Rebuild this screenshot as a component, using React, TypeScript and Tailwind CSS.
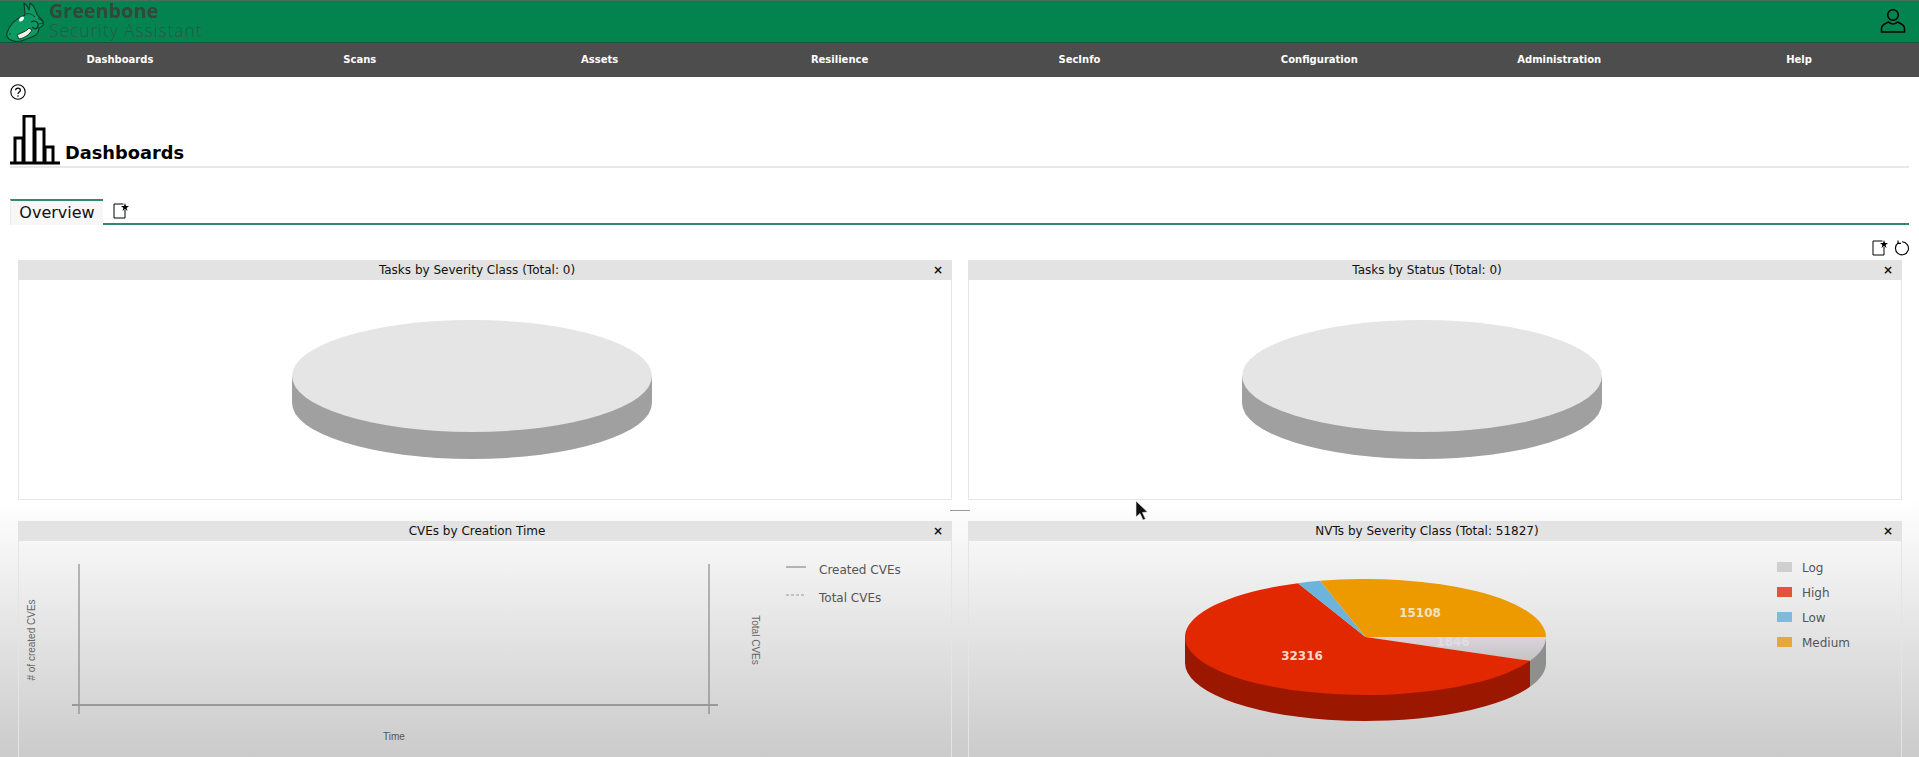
import React from "react";

const font = "font-['DejaVu_Sans',sans-serif]";

function Logo() {
  const ink = "#10382a";
  return (
    <svg width="46" height="41" viewBox="0 0 46 41" className="shrink-0 block">
      <path
        d="M7 32 C9 25 15 18 25 14 C25 9 24 5 24 2 C27 4 28 6 29 9 C30 6 30 4 30 2 C33 4 35 7 36 11 C37 14 38 15 40 17 C42 18 44 21 43 24 C42 26 40 26 39 27 C39 30 38 32 36 34 C31 37 26 38 21 40 C17 41 12 40 9 38 C7 36 6 34 7 32 Z"
        fill="#0a9a62"
        stroke={ink}
        strokeWidth="1.1"
        strokeLinejoin="round"
      />
      <path d="M26 13 C29 12 32 13 35 16" fill="none" stroke={ink} strokeWidth="1" />
      <ellipse cx="21.5" cy="18" rx="3" ry="1.8" fill="#fff" transform="rotate(-40 21.5 18)" />
      <path d="M17 34 C21 32 27 30 29 27 L32 29 C30 33 25 37 19 38 Z" fill="#f2f3e6" stroke={ink} strokeWidth="1" />
      <path d="M31 21 C35 19 39 21 38 25 C37 29 34 28 32 26" fill="none" stroke={ink} strokeWidth="1.3" />
      <path d="M38 17 L42 20 M39 23 L43 22" fill="none" stroke={ink} strokeWidth="0.9" />
      <circle cx="10" cy="33" r="0.8" fill={ink} />
    </svg>
  );
}

function NewDash({ className = "" }: { className?: string }) {
  return (
    <svg width="16" height="16" viewBox="0 0 16 16" className={className}>
      <path d="M10.5 1 H1 V15 H12 V7" fill="none" stroke="#000" strokeWidth="1" />
      <path d="M12 0 L13 3 L16 3 L13.6 4.9 L14.5 8 L12 6.1 L9.5 8 L10.4 4.9 L8 3 L11 3 Z" fill="#000" />
    </svg>
  );
}

function PanelHead({ title }: { title: string }) {
  return (
    <div className="h-[20px] bg-[#e3e3e3] flex items-center text-[12px] text-[#111] pl-[6px] pr-[6px]">
      <span className="flex-1 text-center">{title}</span>
      <span className="w-[16px] text-center text-[12px] font-bold leading-none">×</span>
    </div>
  );
}

function EmptyPie() {
  return (
    <svg width="932" height="219" className="block">
      <path d="M273 96 V123 A180 56 0 0 0 633 123 V96 Z" fill="#a0a0a0" />
      <ellipse cx="453" cy="96" rx="180" ry="56" fill="#e5e5e5" />
    </svg>
  );
}

function TopPanel({ title }: { title: string }) {
  return (
    <div className="h-[240px] flex flex-col">
      <PanelHead title={title} />
      <div className="flex-1 border-x border-b border-[#e6e6e6]">
        <EmptyPie />
      </div>
    </div>
  );
}

function LineChart() {
  const t = "font-['Liberation_Sans',sans-serif]";
  return (
    <svg width="932" height="217" className="block">
      <line x1="60" x2="60" y1="23" y2="173" stroke="#8a8a8a" strokeWidth="1.2" />
      <line x1="690" x2="690" y1="23" y2="173" stroke="#777" strokeWidth="1" />
      <line x1="53" x2="699" y1="164" y2="164" stroke="#999" strokeWidth="2" />
      <text x="13" y="99" fontSize="10" fill="#666" textAnchor="middle" transform="rotate(-90 13 99)" dy="3" className={t}>
        # of created CVEs
      </text>
      <text x="736" y="99" fontSize="10" fill="#666" textAnchor="middle" transform="rotate(90 736 99)" dy="3" className={t}>
        Total CVEs
      </text>
      <text x="375" y="199" fontSize="10" fill="#555" textAnchor="middle" className={t}>
        Time
      </text>
      <line x1="767" x2="787" y1="26" y2="26" stroke="#777" />
      <line x1="767" x2="787" y1="54" y2="54" stroke="#999" strokeDasharray="3 2" />
      <text x="800" y="33" fontSize="12" fill="#555">Created CVEs</text>
      <text x="800" y="61" fontSize="12" fill="#555">Total CVEs</text>
    </svg>
  );
}

function ColoredPie() {
  const cx = 396.5;
  const cy = 96;
  const rx = 180.5;
  const ry = 58;
  const d = 26;
  const yOn = (x: number, sign: number) => cy + sign * ry * Math.sqrt(1 - ((x - cx) / rx) ** 2);
  const gx = 561;
  const gy = yOn(gx, 1);
  const rx0 = 329;
  const ry0 = yOn(rx0, -1);
  const bx = 351;
  const by = yOn(bx, -1);
  return (
    <svg width="932" height="217" className="block">
      <defs>
        <linearGradient id="lg" x1="0" y1="0" x2="0" y2="1">
          <stop offset="0" stopColor="#dcd4dc" />
          <stop offset="1" stopColor="#c2c4c2" />
        </linearGradient>
      </defs>
      <path d={`M${cx + rx} ${cy} V${cy + d} A${rx} ${ry} 0 0 1 ${gx} ${gy + d} V${gy} Z`} fill="#8e908e" />
      <path d={`M${gx} ${gy} V${gy + d} A${rx} ${ry} 0 0 1 ${cx - rx} ${cy + d} V${cy} Z`} fill="#9c1700" />
      <path d={`M${cx} ${cy} L${cx + rx} ${cy} A${rx} ${ry} 0 0 1 ${gx} ${gy} Z`} fill="url(#lg)" />
      <path d={`M${cx} ${cy} L${gx} ${gy} A${rx} ${ry} 0 1 1 ${rx0} ${ry0} Z`} fill="#e22800" />
      <path d={`M${cx} ${cy} L${rx0} ${ry0} A${rx} ${ry} 0 0 1 ${bx} ${by} Z`} fill="#6cb4dc" />
      <path d={`M${cx} ${cy} L${bx} ${by} A${rx} ${ry} 0 0 1 ${cx + rx} ${cy} Z`} fill="#ec9a00" />
      <text x="451" y="76" fontSize="12" fontWeight="700" fill="#f3e2c0" textAnchor="middle">15108</text>
      <text x="333" y="119" fontSize="12" fontWeight="700" fill="#f2d9cd" textAnchor="middle">32316</text>
      <text x="484" y="105" fontSize="12" fontWeight="700" fill="#e2dde2" textAnchor="middle">1846</text>
      {[
        ["Log", "#cfcfcf", 27],
        ["High", "#e2533c", 52],
        ["Low", "#82b8d8", 77],
        ["Medium", "#e8a640", 102],
      ].map(([l, c, y]) => (
        <g key={l as string}>
          <rect x="808" y={(y as number) - 6} width="15" height="10" fill={c as string} />
          <text x="833" y={(y as number) + 4} fontSize="12" fill="#555">{l as string}</text>
        </g>
      ))}
    </svg>
  );
}

function BottomPanel({ title, children }: { title: string; children: React.ReactNode }) {
  return (
    <div className="flex flex-col">
      <PanelHead title={title} />
      <div className="flex-1 border-x border-[#e4e4e4]">{children}</div>
    </div>
  );
}

export default function App() {
  const items = ["Dashboards", "Scans", "Assets", "Resilience", "SecInfo", "Configuration", "Administration", "Help"];
  return (
    <div className={`relative w-full h-[757px] overflow-hidden flex flex-col bg-white ${font}`}>
      <header className="h-[43px] shrink-0 bg-[#03844f] border-t border-[#4a6e5c] border-b border-b-[#0b5c3c] flex items-center justify-between pr-[13px]">
        <div className="flex items-center gap-[3px]">
          <Logo />
          <div className="flex flex-col font-['Open_Sans',sans-serif] -mt-[3px]">
            <span className="text-[19.5px] font-bold leading-[20px] h-[20px] text-[#33483c] tracking-[0.2px]">Greenbone</span>
            <span className="text-[17.5px] font-light leading-[19px] h-[19px] text-[#2a5a45] tracking-[0.9px]">Security Assistant</span>
          </div>
        </div>
        <svg width="26" height="26" viewBox="0 0 26 26" fill="none" stroke="#000" strokeWidth="1.5" className="-mt-[2px]">
          <circle cx="13" cy="7" r="5.3" />
          <path d="M8.5 14 C5 15.5 1.5 16.5 1.5 20.5 V24 H24.5 V20.5 C24.5 16.5 21 15.5 17.5 14 C15.5 16.5 10.5 16.5 8.5 14 Z" />
        </svg>
      </header>
      <nav className="h-[34px] pb-[2px] shrink-0 bg-[#4d4d4e] grid grid-cols-8 items-center text-white text-[10px] font-bold">
        {items.map((i) => (
          <span key={i} className="text-center">{i}</span>
        ))}
      </nav>
      <main className="flex-1 flex flex-col min-h-0">
        <div className="pl-[10px] pt-[7px]">
          <svg width="16" height="16" viewBox="0 0 16 16" fill="none" className="block">
            <circle cx="8" cy="8" r="7.2" stroke="#000" strokeWidth="1.1" />
            <path d="M5.6 6.2 C5.7 3.4 10.4 3.4 10.4 6.2 C10.4 8 8 8 8 10" stroke="#000" strokeWidth="1.2" />
            <circle cx="8" cy="12" r="0.8" fill="#000" />
          </svg>
        </div>
        <div className="mx-[10px] mt-[15px] h-[53px] flex items-start border-b-2 border-[#e8e8e8]">
          <svg width="50" height="50" viewBox="0 0 50 50" fill="none" stroke="#000" strokeWidth="3" className="block shrink-0">
            <path d="M0 48 H50" />
            <path d="M5 48 V23 H13 V48" />
            <path d="M14 48 V1 H24 V48" />
            <path d="M25 48 V14 H34 V48" />
            <path d="M35 48 V32 H43 V48" />
          </svg>
          <span className="ml-[5px] mt-[29px] text-[17.8px] font-bold leading-none text-black">Dashboards</span>
        </div>
        <div className="ml-[10px] mr-[10px] mt-[31px] h-[26px] flex items-end">
          <div className="w-[93px] h-[26px] border-t-2 border-[#2f8a72] bg-[#f7f7f7] border-l border-l-[#ececec] flex items-center justify-center text-[16px] text-[#111] shrink-0">
            Overview
          </div>
          <div className="flex-1 h-[26px] border-b-2 border-[#2f8a72] flex items-center pl-[10px]">
            <NewDash />
          </div>
        </div>
        <div className="h-[15px] mt-[15px] flex justify-end items-center gap-[6px] pr-[9px]">
          <NewDash />
          <svg width="16" height="16" viewBox="0 0 16 16" fill="none" stroke="#000" strokeWidth="1.1">
            <path d="M4.5 2.8 A6.5 6.5 0 1 0 8 1.8" />
            <path d="M4 0.5 V3.4 H7" />
          </svg>
        </div>
        <div className="grid grid-cols-2 gap-x-[16px] pl-[18px] pr-[17px] mt-[5px]">
          <TopPanel title="Tasks by Severity Class (Total: 0)" />
          <TopPanel title="Tasks by Status (Total: 0)" />
        </div>
        <div className="relative flex-1 min-h-0 bg-gradient-to-b from-white to-[#cbcbcb] grid grid-cols-2 gap-x-[16px] pl-[18px] pr-[17px] pt-[21px]">
          <BottomPanel title="CVEs by Creation Time">
            <LineChart />
          </BottomPanel>
          <BottomPanel title="NVTs by Severity Class (Total: 51827)">
            <ColoredPie />
          </BottomPanel>
          <div className="absolute left-[950px] top-[10px] w-[20px] h-[1px] bg-[#999]" />
          <svg width="14" height="22" viewBox="0 0 14 22" className="absolute left-[1135px] top-[0px]">
            <path d="M1 1 V17 L5 13.5 L8 20 L10.5 19 L7.5 12.5 L12.5 12 Z" fill="#111" stroke="#eee" strokeWidth="0.6" />
          </svg>
        </div>
      </main>
    </div>
  );
}
